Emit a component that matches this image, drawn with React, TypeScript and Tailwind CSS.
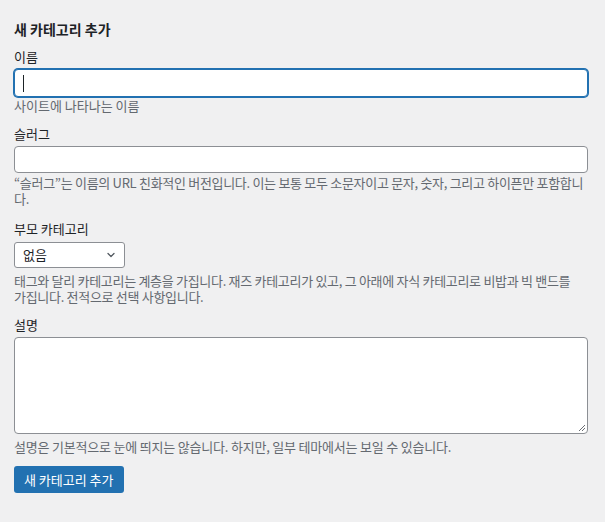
import { ChevronDown } from "lucide-react"

const font = { fontFamily: '"Noto Sans CJK KR", "Noto Sans", sans-serif' }

export default function App() {
  return (
    <div
      className="min-h-[522px] w-full bg-[#f0f0f1] pl-[14px] pr-[17px] pt-[19px] text-[13px] text-[#1d2327]"
      style={font}
    >
      <h2 className="text-[14px] font-semibold leading-[20px]">새 카테고리 추가</h2>

      <div className="mt-[9px]">
        <label className="block leading-[18px]">이름</label>
        <div className="mt-[3px] flex h-[28px] items-center rounded-[4px] border border-[#2271b1] bg-white pl-[8px] shadow-[0_0_0_1px_#2271b1]">
          <span className="h-[17px] w-px bg-[#1d2327]" />
        </div>
        <p className="leading-[18px] text-[#646970]">사이트에 나타나는 이름</p>
      </div>

      <div className="mt-[10px]">
        <label className="block leading-[18px]">슬러그</label>
        <div className="mt-[3px] h-[27px] rounded-[4px] border border-[#8c8f94] bg-white" />
        <p className="mt-[2px] whitespace-nowrap leading-[16px] tracking-[-0.3px] text-[#646970]">
          “슬러그”는 이름의 URL 친화적인 버전입니다. 이는 보통 모두 소문자이고 문자, 숫자, 그리고 하이픈만 포함합니
          <br />
          다.
        </p>
      </div>

      <div className="mt-[13px]">
        <label className="block leading-[18px]">부모 카테고리</label>
        <div className="mt-[4px] flex h-[26px] w-[111px] items-center justify-between rounded-[3px] border border-[#8c8f94] bg-white pl-[8px] pr-[7px]">
          <span>없음</span>
          <ChevronDown className="h-[12px] w-[12px] text-[#50575e]" strokeWidth={2.5} />
        </div>
        <p className="mt-[5px] whitespace-nowrap leading-[16px] tracking-[-0.3px] text-[#646970]">
          태그와 달리 카테고리는 계층을 가집니다. 재즈 카테고리가 있고, 그 아래에 자식 카테고리로 비밥과 빅 밴드를
          <br />
          가집니다. 전적으로 선택 사항입니다.
        </p>
      </div>

      <div className="mt-[11px]">
        <label className="block leading-[18px]">설명</label>
        <div className="relative mt-[3px] h-[97px] rounded-[4px] border border-[#8c8f94] bg-white">
          <svg className="absolute bottom-[1px] right-[1px]" width="9" height="9" viewBox="0 0 9 9">
            <path d="M8 2 L2 8 M8 5 L5 8" stroke="#6c6f74" strokeWidth="1" />
          </svg>
        </div>
        <p className="mt-[4px] leading-[17px] tracking-[-0.2px] text-[#646970]">
          설명은 기본적으로 눈에 띄지는 않습니다. 하지만, 일부 테마에서는 보일 수 있습니다.
        </p>
      </div>

      <button className="mt-[11px] h-[27px] rounded-[3px] bg-[#2271b1] px-[10px] text-[13px] leading-[27px] text-white">
        새 카테고리 추가
      </button>
    </div>
  )
}
